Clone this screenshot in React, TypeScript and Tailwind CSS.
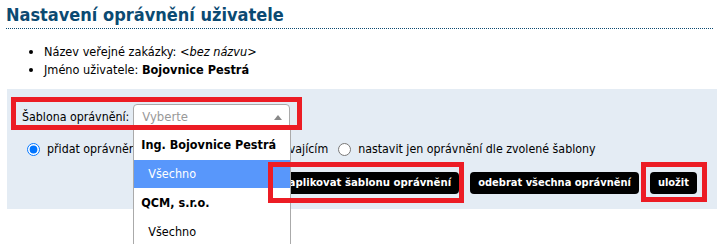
import React from "react";

const font = { fontFamily: "Tahoma, 'DejaVu Sans Condensed', 'DejaVu Sans', sans-serif" };

export default function App() {
  return (
    <div className="relative w-[719px] h-[244px] overflow-hidden bg-white text-black" style={font}>
      <h1 className="mx-[6px] pt-[4px] pb-[3px] text-[18px] leading-[21px] font-bold text-[#0b4a72] border-b border-dotted border-[#0b4a72]">
        Nastavení oprávnění uživatele
      </h1>
      <ul className="mt-[14px] ml-[44px] list-disc text-[12.6px] leading-[18px]">
        <li>
          Název veřejné zakázky: <i>&lt;bez názvu&gt;</i>
        </li>
        <li>
          Jméno uživatele: <b>Bojovnice Pestrá</b>
        </li>
      </ul>
      <div className="mt-[10px] ml-[7px] mr-[2px] h-[120px] bg-[#e4ecf4] pl-[15px] pt-[15px] pr-[20px] text-[12.3px]">
        <div className="flex items-center h-[26px]">
          <span className="mr-[4px] text-[12.3px]">Šablona oprávnění:</span>
          <div className="relative w-[157px] h-[26px] bg-white border border-[#aaaaaa] rounded-t-[4px] flex items-center pl-[8px]">
            <span className="text-[#999999] text-[13px]">Vyberte</span>
            <span className="absolute right-[7px] top-[10px] w-0 h-0 border-l-[4px] border-r-[4px] border-b-[5px] border-l-transparent border-r-transparent border-b-[#888888]" />
            <div className="absolute z-10 left-[-1px] top-[25px] w-[158px] bg-white border border-[#aaaaaa] border-t-0 text-[12.5px]">
              <div className="h-[30px] flex items-center pl-[7px] font-bold">Ing. Bojovnice Pestrá</div>
              <div className="h-[28px] flex items-center pl-[14px] bg-[#5897fb] text-white">Všechno</div>
              <div className="h-[30px] flex items-center pl-[7px] font-bold">QCM, s.r.o.</div>
              <div className="h-[28px] flex items-center pl-[14px]">Všechno</div>
            </div>
          </div>
        </div>
        <div className="flex items-center mt-[11px] h-[16px] pl-[5px]">
          <label className="flex items-center">
            <input type="radio" name="m" defaultChecked className="w-[13px] h-[13px] m-0 accent-[#0075ff]" />
            <span className="ml-[7px]">přidat oprávnění dle zvolené šablony ke stávajícím</span>
          </label>
          <label className="flex items-center ml-[10px]">
            <input type="radio" name="m" className="w-[13px] h-[13px] m-0" />
            <span className="ml-[7px]">nastavit jen oprávnění dle zvolené šablony</span>
          </label>
        </div>
        <div className="flex justify-end gap-[11px] mt-[15px]">
          <button className="h-[22px] pl-[9px] pr-[8px] rounded-[4px] bg-black text-white font-bold text-[11.3px]">aplikovat šablonu oprávnění</button>
          <button className="h-[22px] px-[8px] rounded-[4px] bg-black text-white font-bold text-[11px]">odebrat všechna oprávnění</button>
          <button className="h-[22px] px-[8px] rounded-[4px] bg-black text-white font-bold text-[11px]">uložit</button>
        </div>
      </div>
      <div className="absolute z-20 left-[11px] top-[97px] w-[291px] h-[33px] border-[5px] border-[#ec1c24] pointer-events-none" />
      <div className="absolute z-20 left-[268px] top-[162px] w-[196px] h-[41px] border-[5px] border-[#ec1c24] pointer-events-none" />
      <div className="absolute z-20 left-[641px] top-[162px] w-[66px] h-[40px] border-[5px] border-[#ec1c24] pointer-events-none" />
    </div>
  );
}
